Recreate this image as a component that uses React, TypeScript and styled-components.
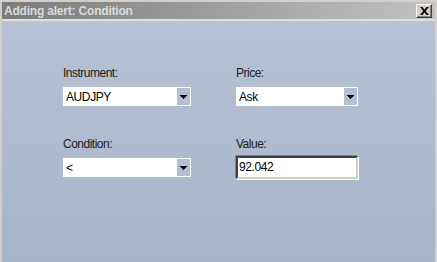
import React from "react";
import styled, { createGlobalStyle } from "styled-components";

const GlobalStyle = createGlobalStyle`
    html, body {
        margin: 0;
        padding: 0;
        background: #d4d0c8;
    }
    * {
        box-sizing: border-box;
    }
`;

const Window = styled.div`
    width: 437px;
    height: 262px;
    display: flex;
    flex-direction: column;
    background: #d4d0c8;
    padding: 2px 2px 0 2px;
    font-family: "Liberation Sans", Arial, sans-serif;
`;

const TitleBar = styled.div`
    height: 17px;
    display: flex;
    align-items: center;
    justify-content: space-between;
    padding: 0 3px 0 2px;
    background: linear-gradient(to right, #7b7b7b, #a2a2a2 55%, #c2c2c2);
`;

const Title = styled.span`
    font-weight: bold;
    font-size: 12px;
    letter-spacing: -0.2px;
    color: #dadada;
`;

const CloseButton = styled.button`
    width: 16px;
    height: 14px;
    padding: 0;
    margin: 0;
    display: flex;
    align-items: center;
    justify-content: center;
    background: #d4d0c8;
    border: 1px solid;
    border-color: #ffffff #404040 #404040 #ffffff;
    box-shadow: inset -1px -1px 0 #808080;
`;

const Separator = styled.div`
    height: 2px;
    background: #e2e0da;
`;

const Body = styled.div`
    flex: 1;
    background: linear-gradient(to bottom, #b8c2d4, #a7b3c7);
    padding: 45px 0 0 61px;
`;

const Form = styled.div`
    display: grid;
    grid-template-columns: 128px 122px;
    column-gap: 45px;
    row-gap: 29px;
`;

const Field = styled.div`
    display: flex;
    flex-direction: column;
    gap: 5px;
`;

const Label = styled.label`
    font-size: 12px;
    line-height: 14px;
    letter-spacing: -0.5px;
    color: #1c1c1c;
`;

const ControlRow = styled.div`
    height: 23px;
    display: flex;
    align-items: center;
`;

const Combo = styled.div`
    width: 100%;
    height: 19px;
    background: #ffffff;
    display: flex;
    align-items: center;
    padding: 1px;
`;

const ComboText = styled.span`
    flex: 1;
    padding-left: 2px;
    font-size: 12px;
    letter-spacing: -0.4px;
    color: #000;
`;

const ComboButton = styled.div`
    width: 13px;
    height: 17px;
    background: #b5bfd1;
    display: flex;
    align-items: center;
    justify-content: center;
`;

const TextInput = styled.div`
    width: 100%;
    height: 23px;
    background: #ffffff;
    border: 2px solid;
    border-color: #404040 #d4d0c8 #d4d0c8 #404040;
    box-shadow: -1px -1px 0 #808080, 1px 1px 0 #ffffff;
    font-size: 12px;
    letter-spacing: -0.4px;
    color: #000;
    padding: 2px 0 0 1px;
    line-height: 15px;
`;

function Arrow() {
    return (
        <svg width="7" height="4" viewBox="0 0 7 4">
            <path d="M0 0h7v1h-1v1h-1v1h-1v1h-1v-1h-1v-1h-1v-1h-1z" fill="#000" />
        </svg>
    );
}

function CloseIcon() {
    return (
        <svg width="9" height="8" viewBox="0 0 9 8">
            <path d="M0 0h2.4l2.1 2.6L6.6 0H9L5.7 4 9 8H6.6L4.5 5.4 2.4 8H0l3.3-4z" fill="#000" />
        </svg>
    );
}

function ComboBox({ value }: { value: string }) {
    return (
        <ControlRow>
            <Combo>
                <ComboText>{value}</ComboText>
                <ComboButton>
                    <Arrow />
                </ComboButton>
            </Combo>
        </ControlRow>
    );
}

export default function App() {
    return (
        <>
            <GlobalStyle />
            <Window>
                <TitleBar>
                    <Title>Adding alert: Condition</Title>
                    <CloseButton>
                        <CloseIcon />
                    </CloseButton>
                </TitleBar>
                <Separator />
                <Body>
                    <Form>
                        <Field>
                            <Label>Instrument:</Label>
                            <ComboBox value="AUDJPY" />
                        </Field>
                        <Field>
                            <Label>Price:</Label>
                            <ComboBox value="Ask" />
                        </Field>
                        <Field>
                            <Label>Condition:</Label>
                            <ComboBox value="<" />
                        </Field>
                        <Field>
                            <Label>Value:</Label>
                            <ControlRow>
                                <TextInput>92.042</TextInput>
                            </ControlRow>
                        </Field>
                    </Form>
                </Body>
            </Window>
        </>
    );
}
